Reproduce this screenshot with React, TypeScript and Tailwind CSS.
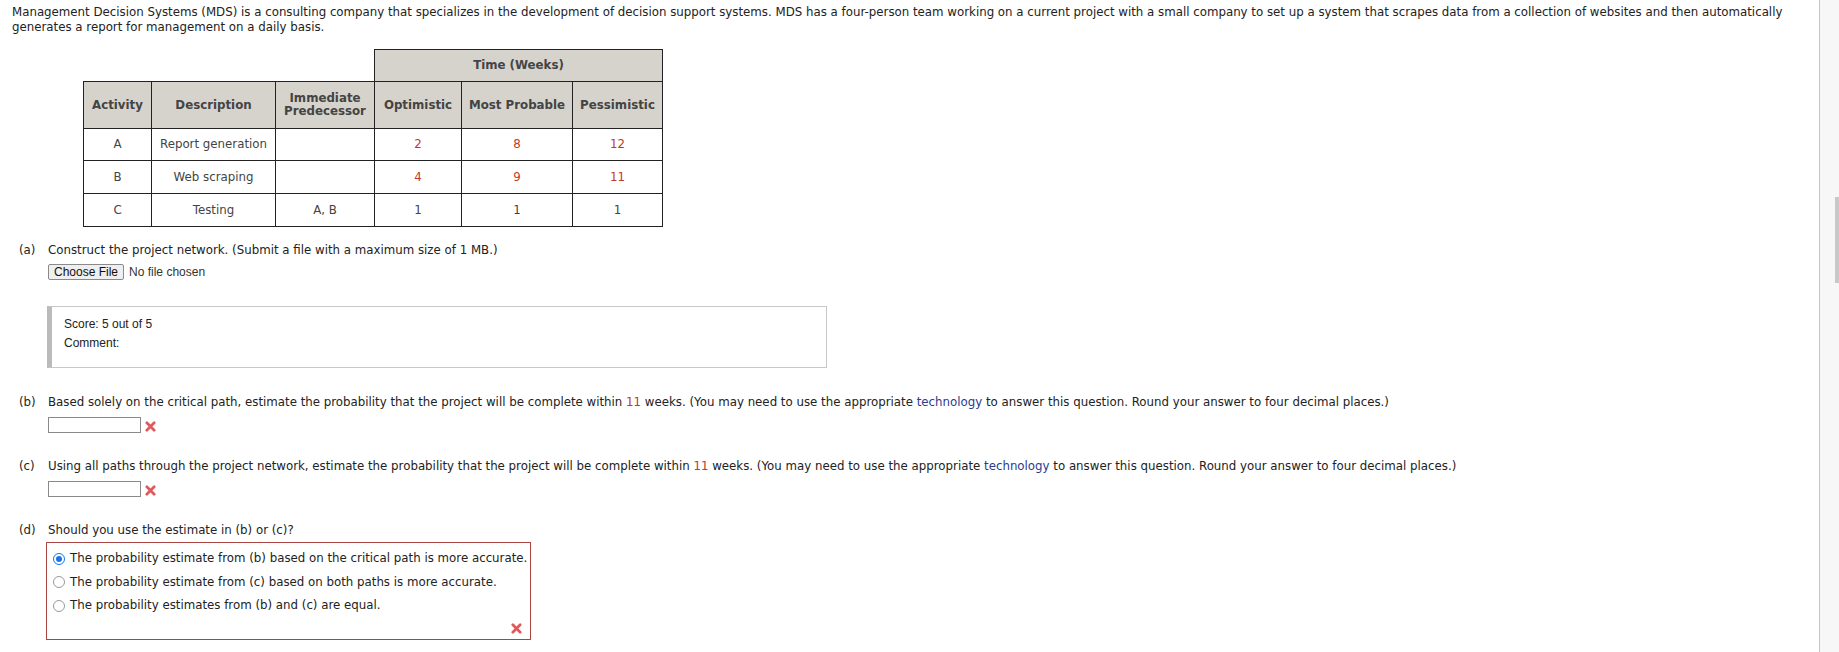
import React from 'react'

const sans = "font-['DejaVu_Sans',Verdana,sans-serif]"
const arial = "font-['Liberation_Sans',Arial,sans-serif]"

function RedX({ className = '' }: { className?: string }) {
  return (
    <svg viewBox="0 0 12 12" className={`h-[11px] w-[11px] ${className}`} aria-hidden>
      <path d="M2 2 L10 10 M10 2 L2 10" stroke="#e05a5a" strokeWidth="3" strokeLinecap="round" />
    </svg>
  )
}

function Radio({ checked }: { checked?: boolean }) {
  return (
    <span
      className={`flex h-[12px] w-[12px] shrink-0 items-center justify-center rounded-full border bg-white ${
        checked ? 'border-[#1a73e8]' : 'border-[#9a9a9a]'
      }`}
    >
      {checked && <span className="h-[6px] w-[6px] rounded-full bg-[#1a73e8]" />}
    </span>
  )
}

const rows = [
  { act: 'A', desc: 'Report generation', pred: '', o: '2', m: '8', p: '12', red: true },
  { act: 'B', desc: 'Web scraping', pred: '', o: '4', m: '9', p: '11', red: true },
  { act: 'C', desc: 'Testing', pred: 'A, B', o: '1', m: '1', p: '1', red: false },
]

const cell = 'border border-[#222] text-center align-middle'

function Question({ label, children }: { label: string; children: React.ReactNode }) {
  return (
    <div className="flex">
      <span className="w-[36px] shrink-0 pl-[7px]">{label}</span>
      <div className="flex-1">{children}</div>
    </div>
  )
}

export default function App() {
  return (
    <div className={`flex h-[652px] w-[1839px] overflow-hidden bg-white text-[11.8px] leading-[15px] text-[#222] ${sans}`}>
      <div className="flex-1 pl-[12px] pt-[5px]">
        <p className="pr-[30px]">
          Management Decision Systems (MDS) is a consulting company that specializes in the development of decision
          support systems. MDS has a four-person team working on a current project with a small company to set up a
          system that scrapes data from a collection of websites and then automatically generates a report for
          management on a daily basis.
        </p>

        <table className="ml-[71px] mt-[14px] table-fixed border-collapse text-[#444]">
          <colgroup>
            <col className="w-[68px]" />
            <col className="w-[124px]" />
            <col className="w-[99px]" />
            <col className="w-[87px]" />
            <col className="w-[111px]" />
            <col className="w-[90px]" />
          </colgroup>
          <thead>
            <tr className="h-[32px]">
              <th colSpan={3} />
              <th colSpan={3} className={`${cell} bg-[#d6d3cc] font-bold`}>
                Time (Weeks)
              </th>
            </tr>
            <tr className="h-[47px] bg-[#d6d3cc] font-bold">
              <th className={cell}>Activity</th>
              <th className={cell}>Description</th>
              <th className={`${cell} leading-[13px]`}>
                Immediate
                <br />
                Predecessor
              </th>
              <th className={cell}>Optimistic</th>
              <th className={cell}>Most Probable</th>
              <th className={cell}>Pessimistic</th>
            </tr>
          </thead>
          <tbody>
            {rows.map((r, i) => (
              <tr key={r.act} className={i === 0 ? 'h-[32px]' : 'h-[33px]'}>
                <td className={cell}>{r.act}</td>
                <td className={cell}>{r.desc}</td>
                <td className={cell}>{r.pred}</td>
                <td className={`${cell} ${r.red ? 'text-[#c0392b]' : ''}`}>{r.o}</td>
                <td className={`${cell} ${r.red ? 'text-[#c0392b]' : ''}`}>{r.m}</td>
                <td className={`${cell} ${r.red ? 'text-[#c0392b]' : ''}`}>{r.p}</td>
              </tr>
            ))}
          </tbody>
        </table>

        <div className="mt-[16px]">
          <Question label="(a)">
            <p>Construct the project network. (Submit a file with a maximum size of 1 MB.)</p>
            <div className={`mt-[6px] flex items-center text-[12px] ${arial}`}>
              <span className="flex h-[16px] items-center rounded-[2px] border border-[#8a8a8a] bg-[#efefef] px-[5px] text-[#111]">
                Choose File
              </span>
              <span className="ml-[5px] text-[#333]">No file chosen</span>
            </div>
          </Question>
        </div>

        <div className={`ml-[35px] mt-[26px] h-[62px] w-[780px] border border-l-[5px] border-[#c8c8c8] border-l-[#bbbbbb] pl-[12px] pt-[8px] text-[12px] leading-[19px] text-[#222] ${arial}`}>
          <p>Score: 5 out of 5</p>
          <p>Comment:</p>
        </div>

        <div className="mt-[27px]">
          <Question label="(b)">
            <p>
              Based solely on the critical path, estimate the probability that the project will be complete within{' '}
              <span className="text-[#c0392b]">11</span> weeks. (You may need to use the appropriate{' '}
              <span className="text-[#2a3b8f]">technology</span> to answer this question. Round your answer to four
              decimal places.)
            </p>
            <div className="mt-[7px] flex items-center">
              <span className="h-[16px] w-[93px] border border-[#8a8a8a] bg-white" />
              <RedX className="ml-[4px] mt-[3px]" />
            </div>
          </Question>
        </div>

        <div className="mt-[26px]">
          <Question label="(c)">
            <p>
              Using all paths through the project network, estimate the probability that the project will be complete
              within <span className="text-[#c0392b]">11</span> weeks. (You may need to use the appropriate{' '}
              <span className="text-[#2a3b8f]">technology</span> to answer this question. Round your answer to four
              decimal places.)
            </p>
            <div className="mt-[7px] flex items-center">
              <span className="h-[16px] w-[93px] border border-[#8a8a8a] bg-white" />
              <RedX className="ml-[4px] mt-[3px]" />
            </div>
          </Question>
        </div>

        <div className="mt-[26px]">
          <Question label="(d)">
            <p>Should you use the estimate in (b) or (c)?</p>
            <div className="-ml-[2px] mt-[4px] w-[485px] border border-[#a94442] pb-[2px] pl-[6px] pr-[8px] pt-[4px]">
              {[
                'The probability estimate from (b) based on the critical path is more accurate.',
                'The probability estimate from (c) based on both paths is more accurate.',
                'The probability estimates from (b) and (c) are equal.',
              ].map((t, i) => (
                <div key={t} className="flex h-[23.5px] items-center gap-[5px] whitespace-nowrap">
                  <Radio checked={i === 0} />
                  <span>{t}</span>
                </div>
              ))}
              <div className="flex h-[19px] items-end justify-end pb-[3px]">
                <RedX />
              </div>
            </div>
          </Question>
        </div>
      </div>

      <div className="flex w-[20px] shrink-0 justify-end border-l border-[#c4c4c4] bg-[#f7f7f7]">
        <span className="mt-[197px] h-[86px] w-[4px] bg-[#c8c8c8]" />
      </div>
    </div>
  )
}
